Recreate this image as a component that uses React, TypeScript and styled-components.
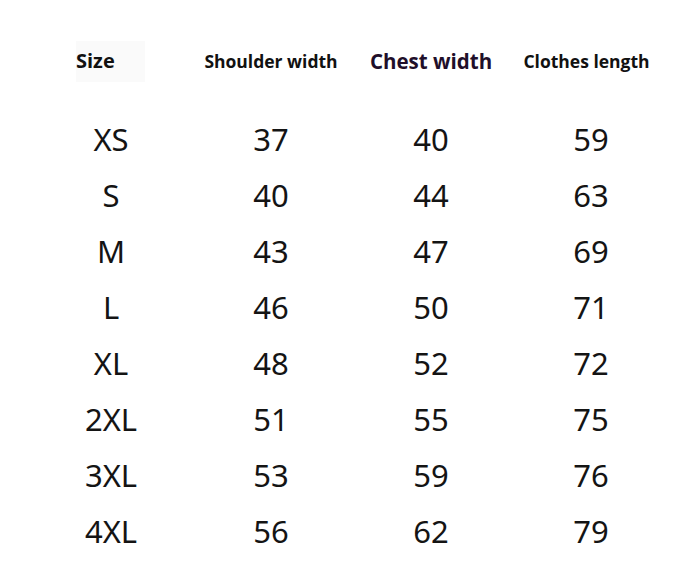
import React from "react";
import styled, { createGlobalStyle } from "styled-components";

const GlobalStyle = createGlobalStyle`
  html, body {
    margin: 0;
    padding: 0;
    background: #ffffff;
  }
`;

const Page = styled.div`
  width: 693px;
  height: 571px;
  padding: 41px 0 0 31px;
  box-sizing: border-box;
  background: #ffffff;
  overflow: hidden;
`;

const Grid = styled.div`
  display: grid;
  grid-template-columns: repeat(4, 160px);
`;

const HeadCell = styled.div<{ $size: number; $color?: string; $left?: boolean; $nudge?: number }>`
  height: 40px;
  display: flex;
  align-items: center;
  justify-content: ${p => (p.$left ? "flex-start" : "center")};
  padding-left: ${p => (p.$left ? "45px" : "0")};
  padding-right: ${p => p.$nudge || 0}px;
  margin-bottom: 30px;
  font-family: "Open Sans", "Liberation Sans", sans-serif;
  font-weight: 700;
  font-size: ${p => p.$size}px;
  color: ${p => p.$color || "#111111"};
  white-space: nowrap;
`;

const SizeLabel = styled.span`
  background: #fafafa;
  padding: 6px 30px 8px 0;
`;

const Cell = styled.div`
  height: 56px;
  display: flex;
  align-items: center;
  justify-content: center;
  font-family: "Noto Sans", "DejaVu Sans", sans-serif;
  font-size: 31px;
  color: #141414;
`;

const rows: [string, number, number, number][] = [
  ["XS", 37, 40, 59],
  ["S", 40, 44, 63],
  ["M", 43, 47, 69],
  ["L", 46, 50, 71],
  ["XL", 48, 52, 72],
  ["2XL", 51, 55, 75],
  ["3XL", 53, 59, 76],
  ["4XL", 56, 62, 79],
];

const App = () => {
  return (
    <>
      <GlobalStyle />
      <Page>
        <Grid>
          <HeadCell $size={20} $left>
            <SizeLabel>Size</SizeLabel>
          </HeadCell>
          <HeadCell $size={17.5}>Shoulder width</HeadCell>
          <HeadCell $size={20.5} $color="#1f0f2a">Chest width</HeadCell>
          <HeadCell $size={17.5} $nudge={9}>Clothes length</HeadCell>
          {rows.map(r => (
            <React.Fragment key={r[0]}>
              <Cell>{r[0]}</Cell>
              <Cell>{r[1]}</Cell>
              <Cell>{r[2]}</Cell>
              <Cell>{r[3]}</Cell>
            </React.Fragment>
          ))}
        </Grid>
      </Page>
    </>
  );
};

export default App;
